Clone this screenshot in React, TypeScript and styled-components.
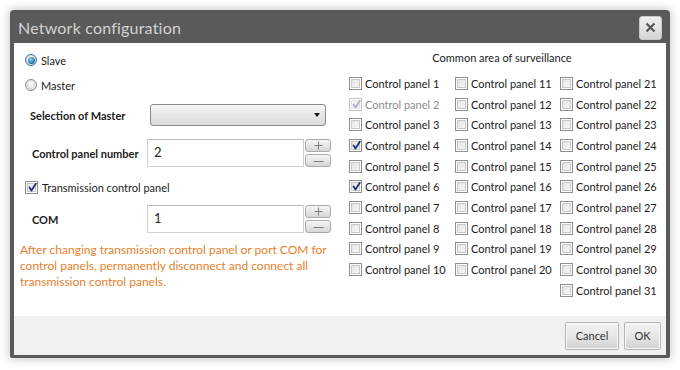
import React from "react";
import styled, { createGlobalStyle, css } from "styled-components";

const Global = createGlobalStyle`
  html, body { margin: 0; padding: 0; background: #ffffff; }
  body { font-family: Lato, "Open Sans", sans-serif; }
  * { box-sizing: border-box; }
`;

const Page = styled.div`
  width: 680px;
  height: 370px;
  padding: 10px 0 0 10px;
  background: #ffffff;
`;

const Dialog = styled.div`
  width: 660px;
  height: 348px;
  display: flex;
  flex-direction: column;
  background: #5a5a5a;
  border-radius: 4px 4px 2px 2px;
  padding: 0 4px 3px 4px;
  box-shadow: 0 0 8px 2px rgba(0, 0, 0, 0.18);
`;

const TitleBar = styled.div`
  height: 33px;
  display: flex;
  align-items: center;
  justify-content: space-between;
  padding: 0 4px 0 4px;
`;

const Title = styled.div`
  font-size: 16px;
  color: #d2d2d2;
  letter-spacing: 0.2px;
  padding-top: 2px;
`;

const CloseButton = styled.div`
  width: 23px;
  height: 24px;
  margin-top: 2px;
  border-radius: 3px;
  background: linear-gradient(#f0f0f0, #d4d4d4);
  border: 1px solid #c9c9c9;
  display: flex;
  align-items: center;
  justify-content: center;
`;

const Body = styled.div`
  flex: 1;
  background: #ffffff;
  display: flex;
`;

const LeftCol = styled.div`
  width: 325px;
  padding: 7px 0 0 6px;
  display: flex;
  flex-direction: column;
`;

const OptionRow = styled.label<{ $mt?: number }>`
  height: 20px;
  margin-top: ${(p) => p.$mt ?? 0}px;
  display: flex;
  align-items: center;
  gap: 4px;
  padding-left: 5px;
  font-size: 11px;
  color: #222;
`;

const Radio = styled.span<{ $on?: boolean }>`
  width: 12px;
  height: 12px;
  border-radius: 50%;
  border: 1px solid #8c8c8c;
  background: radial-gradient(circle at 50% 40%, #fafafa, #cfcfcf);
  display: inline-flex;
  align-items: center;
  justify-content: center;
  ${(p) =>
    p.$on &&
    css`
      border-color: #3a6f98;
      &::after {
        content: "";
        width: 7px;
        height: 7px;
        border-radius: 50%;
        background: radial-gradient(circle at 40% 35%, #8fd0f2, #1f6ea6 70%);
      }
    `}
`;

const FieldRow = styled.div<{ $h: number; $mt: number }>`
  height: ${(p) => p.$h}px;
  margin-top: ${(p) => p.$mt}px;
  display: flex;
  align-items: center;
`;

const FieldLabel = styled.div<{ $w: number; $pl: number }>`
  width: ${(p) => p.$w}px;
  padding-left: ${(p) => p.$pl}px;
  font-size: 11px;
  font-weight: 700;
  color: #222;
  white-space: nowrap;
`;

const Select = styled.div`
  width: 176px;
  height: 22px;
  border: 1px solid #8a8a8a;
  border-radius: 3px;
  background: linear-gradient(#f7f7f7, #e6e6e6 50%, #d9d9d9);
  display: flex;
  align-items: center;
  justify-content: flex-end;
  padding-right: 5px;
`;

const Arrow = styled.span`
  width: 0;
  height: 0;
  border-left: 3.5px solid transparent;
  border-right: 3.5px solid transparent;
  border-top: 4px solid #111;
`;

const NumInput = styled.div`
  width: 157px;
  height: 28px;
  border: 1px solid #d0d0d0;
  border-top-color: #bdbdbd;
  background: #fff;
  font-size: 13px;
  color: #222;
  padding: 4px 0 0 6px;
`;

const Spinner = styled.div`
  margin-left: 1px;
  display: flex;
  flex-direction: column;
  gap: 2px;
`;

const SpinBtn = styled.div`
  width: 26px;
  height: 13px;
  border: 1px solid #a9a9a9;
  border-radius: 3px;
  background: linear-gradient(#f6f6f6, #d6d6d6);
  display: flex;
  align-items: center;
  justify-content: center;
`;

const Note = styled.div`
  margin-top: 9px;
  font-size: 12px;
  line-height: 16px;
  color: #e8802c;
  width: 318px;
`;

const RightCol = styled.div`
  flex: 1;
  padding: 8px 0 0 0;
  display: flex;
  flex-direction: column;
`;

const AreaTitle = styled.div`
  height: 18px;
  width: 328px;
  text-align: center;
  font-size: 11px;
  color: #222;
`;

const Grid = styled.div`
  display: flex;
  margin-top: 4px;
  padding-left: 11px;
`;

const Column = styled.div<{ $w: number }>`
  width: ${(p) => p.$w}px;
  display: flex;
  flex-direction: column;
`;

const CheckRow = styled.label<{ $disabled?: boolean }>`
  height: 20.7px;
  display: flex;
  align-items: center;
  gap: 3px;
  font-size: 11px;
  color: ${(p) => (p.$disabled ? "#8c8c8c" : "#222")};
  white-space: nowrap;
`;

const Box = styled.span<{ $disabled?: boolean }>`
  position: relative;
  width: 13px;
  height: 13px;
  flex: none;
  border: 1px solid ${(p) => (p.$disabled ? "#c2c2c2" : "#8e8f8f")};
  background: #fff;
  padding: 1px;
  display: inline-flex;
  &::before {
    content: "";
    flex: 1;
    background: ${(p) =>
      p.$disabled ? "linear-gradient(135deg, #f6f6f6, #ececec)" : "linear-gradient(135deg, #e4e4e4, #f6f6f6)"};
    border: 1px solid ${(p) => (p.$disabled ? "#e6e6e6" : "#c9c9c9")};
  }
`;

const Check = styled.svg`
  position: absolute;
  left: 1px;
  top: 0px;
`;

const Footer = styled.div`
  height: 39px;
  background: #f0f0f0;
  display: flex;
  justify-content: flex-end;
  align-items: center;
  gap: 5px;
  padding-right: 5px;
`;

const Button = styled.div<{ $w: number }>`
  width: ${(p) => p.$w}px;
  height: 28px;
  border: 1px solid #b4b4b4;
  border-radius: 2px;
  background: linear-gradient(#f3f3f3, #e6e6e6 50%, #d2d2d2);
  box-shadow: inset 0 0 0 1px #f8f8f8;
  display: flex;
  align-items: center;
  justify-content: center;
  font-size: 11px;
  color: #333;
`;

function CheckBox({ checked, disabled }: { checked?: boolean; disabled?: boolean }) {
  return (
    <Box $disabled={disabled}>
      {checked && (
        <Check width="11" height="11" viewBox="0 0 11 11">
          <path
            d="M2.5 5.5 L4.5 8.5 L8.8 1.8"
            fill="none"
            stroke={disabled ? "#a9b4c4" : "#1d2f7a"}
            strokeWidth="1.8"
            strokeLinecap="round"
            strokeLinejoin="round"
          />
        </Check>
      )}
    </Box>
  );
}

function SpinButtons() {
  return (
    <Spinner>
      <SpinBtn>
        <svg width="9" height="9" viewBox="0 0 9 9">
          <path d="M4.5 0.5 V8.5 M0.5 4.5 H8.5" stroke="#7d7d7d" strokeWidth="1" />
        </svg>
      </SpinBtn>
      <SpinBtn>
        <svg width="11" height="9" viewBox="0 0 11 9">
          <path d="M0.5 5.5 H10.5" stroke="#7d7d7d" strokeWidth="1" />
        </svg>
      </SpinBtn>
    </Spinner>
  );
}

const columns: number[][] = [
  [1, 2, 3, 4, 5, 6, 7, 8, 9, 10],
  [11, 12, 13, 14, 15, 16, 17, 18, 19, 20],
  [21, 22, 23, 24, 25, 26, 27, 28, 29, 30, 31],
];
const colWidths = [106, 105, 110];
const checked = new Set([2, 4, 6]);

export default function App() {
  return (
    <Page>
      <Global />
      <Dialog>
        <TitleBar>
          <Title>Network configuration</Title>
          <CloseButton>
            <svg width="11" height="11" viewBox="0 0 11 11">
              <path d="M1.5 1.5 L9.5 9.5 M9.5 1.5 L1.5 9.5" stroke="#555" strokeWidth="2.2" />
            </svg>
          </CloseButton>
        </TitleBar>
        <Body>
          <LeftCol>
            <OptionRow>
              <Radio $on />
              Slave
            </OptionRow>
            <OptionRow $mt={5}>
              <Radio />
              Master
            </OptionRow>
            <FieldRow $h={22} $mt={9}>
              <FieldLabel $w={130} $pl={10}>Selection of Master</FieldLabel>
              <Select>
                <Arrow />
              </Select>
            </FieldRow>
            <FieldRow $h={28} $mt={13}>
              <FieldLabel $w={127} $pl={12}>Control panel number</FieldLabel>
              <NumInput>2</NumInput>
              <SpinButtons />
            </FieldRow>
            <OptionRow $mt={10}>
              <CheckBox checked />
              Transmission control panel
            </OptionRow>
            <FieldRow $h={28} $mt={8}>
              <FieldLabel $w={127} $pl={12}>COM</FieldLabel>
              <NumInput>1</NumInput>
              <SpinButtons />
            </FieldRow>
            <Note>
              After changing transmission control panel or port COM for control panels, permanently disconnect and
              connect all transmission control panels.
            </Note>
          </LeftCol>
          <RightCol>
            <AreaTitle>Common area of surveillance</AreaTitle>
            <Grid>
              {columns.map((col, ci) => (
                <Column key={ci} $w={colWidths[ci]}>
                  {col.map((n) => (
                    <CheckRow key={n} $disabled={n === 2}>
                      <CheckBox checked={checked.has(n)} disabled={n === 2} />
                      Control panel {n}
                    </CheckRow>
                  ))}
                </Column>
              ))}
            </Grid>
          </RightCol>
        </Body>
        <Footer>
          <Button $w={54}>Cancel</Button>
          <Button $w={37}>OK</Button>
        </Footer>
      </Dialog>
    </Page>
  );
}
